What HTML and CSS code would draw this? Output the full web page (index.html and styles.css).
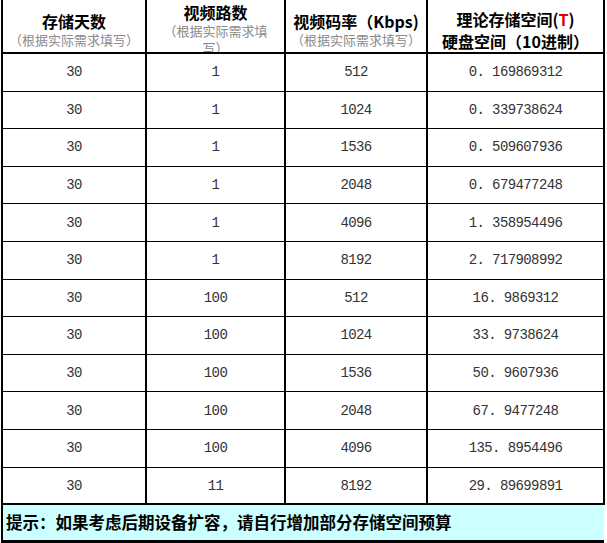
FILE: index.html
```html
<!DOCTYPE html>
<html lang="zh-CN">
<head>
<meta charset="utf-8">
<title>存储空间计算</title>
<link rel="stylesheet" href="styles.css">
</head>
<body>
<table class="calc">
  <colgroup>
    <col class="c1"><col class="c2"><col class="c3"><col class="c4">
  </colgroup>
  <thead>
    <tr>
      <th><div class="hcell"><div class="title">存储天数</div><div class="sub">（根据实际需求填写）</div></div></th>
      <th><div class="hcell hcell-top"><div class="title">视频路数</div><div class="sub">（根据实际需求填写）</div></div></th>
      <th><div class="hcell"><div class="title">视频码率（Kbps)</div><div class="sub">（根据实际需求填写）</div></div></th>
      <th><div class="hcell hcell-two"><div class="title">理论存储空间(<span class="red">T</span>)</div><div class="title">硬盘空间（10进制）</div></div></th>
    </tr>
  </thead>
  <tbody>
    <tr><td>30</td><td>1</td><td>512</td><td>0. 169869312</td></tr>
    <tr><td>30</td><td>1</td><td>1024</td><td>0. 339738624</td></tr>
    <tr><td>30</td><td>1</td><td>1536</td><td>0. 509607936</td></tr>
    <tr><td>30</td><td>1</td><td>2048</td><td>0. 679477248</td></tr>
    <tr><td>30</td><td>1</td><td>4096</td><td>1. 358954496</td></tr>
    <tr><td>30</td><td>1</td><td>8192</td><td>2. 717908992</td></tr>
    <tr><td>30</td><td>100</td><td>512</td><td>16. 9869312</td></tr>
    <tr><td>30</td><td>100</td><td>1024</td><td>33. 9738624</td></tr>
    <tr><td>30</td><td>100</td><td>1536</td><td>50. 9607936</td></tr>
    <tr><td>30</td><td>100</td><td>2048</td><td>67. 9477248</td></tr>
    <tr><td>30</td><td>100</td><td>4096</td><td>135. 8954496</td></tr>
    <tr class="last"><td>30</td><td>11</td><td>8192</td><td>29. 89699891</td></tr>
  </tbody>
  <tfoot>
    <tr><td colspan="4" class="tip">提示：如果考虑后期设备扩容，请自行增加部分存储空间预算</td></tr>
  </tfoot>
</table>
</body>
</html>
```

FILE: styles.css
```css
html, body {
  margin: 0;
  padding: 0;
  background: #ffffff;
}

.calc {
  margin-left: 1px;
  border-collapse: collapse;
  table-layout: fixed;
  width: 604px;
  border-left: 2px solid #000;
  border-right: 2px solid #000;
}

.c1 { width: 144px; }
.c2 { width: 139px; }
.c3 { width: 142px; }
.c4 { width: 177px; }

.calc th {
  padding: 0;
  border-left: 2px solid #000;
  border-right: 2px solid #000;
  border-bottom: 2px solid #000;
  vertical-align: top;
  font-weight: normal;
}

.hcell {
  height: 52px;
  overflow: hidden;
  padding: 11px 2px 0;
  box-sizing: border-box;
  text-align: center;
  font-family: "Noto Sans CJK SC", "DejaVu Sans", sans-serif;
}

.hcell-top {
  padding: 3px 10px 0;
}

.hcell-two {
  padding-top: 8px;
}

.title {
  font-size: 16px;
  line-height: 20px;
  font-weight: bold;
  color: #000;
}

.hcell-top .title {
  line-height: 19px;
}

.hcell-two .title {
  line-height: 22px;
}

.sub {
  font-size: 13px;
  line-height: 17px;
  color: #8a8a8a;
}

.red {
  color: #e00000;
}

.calc td {
  height: 36.6px;
  padding: 0;
  border-left: 2px solid #000;
  border-right: 2px solid #000;
  border-bottom: 1px solid #000;
  text-align: center;
  vertical-align: middle;
  font-family: "Liberation Mono", "DejaVu Sans Mono", monospace;
  font-size: 14px;
  letter-spacing: -0.6px;
  color: #333;
}

.calc tr.last td {
  height: 33px;
  padding-top: 2px;
  border-bottom: 2px solid #000;
}

.calc td.tip {
  height: 35px;
  padding: 0 0 0 3px;
  text-align: left;
  background: #ccffff;
  border-top: 2px solid #000;
  border-bottom: 3px solid #000;
  border-right-style: hidden;
  font-family: "Noto Sans CJK SC", "DejaVu Sans", sans-serif;
  font-weight: bold;
  font-size: 16.5px;
  letter-spacing: 0;
  color: #000;
}
```
